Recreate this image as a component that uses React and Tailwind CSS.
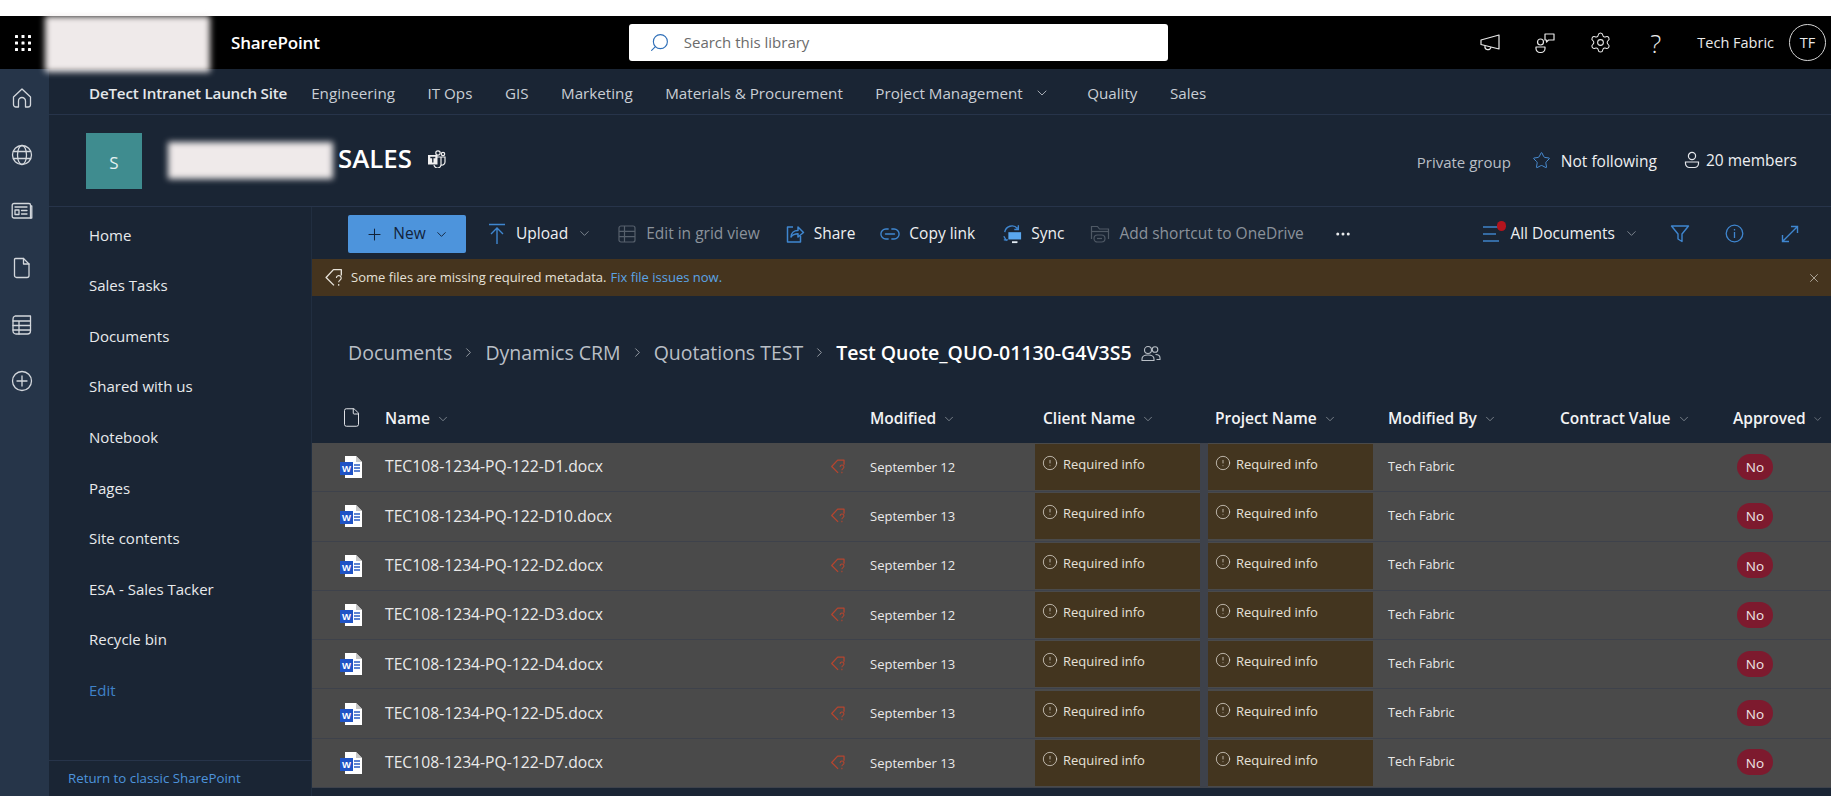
import React from "react";
import { Settings, Plus, ChevronDown, ChevronRight, Ellipsis, Star, X, CircleAlert, Search, File } from "lucide-react";

function Dots() {
  const pts = [0, 1, 2];
  return (
    <svg width="18" height="18" viewBox="0 0 18 18" fill="#fff">
      {pts.map((r) => pts.map((c) => <rect key={`${r}${c}`} x={1 + c * 6.5} y={1 + r * 6.5} width="3" height="3" rx="0.6" />))}
    </svg>
  );
}

const railProps = { fill: "none", stroke: "#d3d7dc", strokeWidth: 1.3, strokeLinejoin: "round", strokeLinecap: "round" };

function HomeIcon() {
  return (
    <svg width="22" height="22" viewBox="0 0 22 22" {...railProps}>
      <path d="M2.5 10L11 2l8.5 8v7.5a2.5 2.5 0 0 1-2.5 2.5h-2.5v-6a3.500 3.500 0 0 0-7 0v6H5a2.500 2.500 0 0 1-2.500-2.500z" />
    </svg>
  );
}
function GlobeIcon() {
  return (
    <svg width="22" height="22" viewBox="0 0 22 22" {...railProps}>
      <circle cx="11" cy="11" r="9.5" />
      <ellipse cx="11" cy="11" rx="4.5" ry="9.5" />
      <path d="M2.5 7.5h17M2.5 14.5h17" />
    </svg>
  );
}
function NewsIcon() {
  return (
    <svg width="22" height="18" viewBox="0 0 22 18" {...railProps}>
      <path d="M3 1.5h15a1.500 1.500 0 0 1 1.500 1.500v13H3a1.800 1.800 0 0 1-1.800-1.800V3.300A1.800 1.800 0 0 1 3 1.500z" />
      <path d="M19.5 4h1.300v12h-1.300" />
      <rect x="4" y="8" width="4" height="4.5" />
      <path d="M4 5h12M10.5 8.500h5.500M10.500 12h5.500" />
    </svg>
  );
}
function FileIcon() {
  return (
    <svg width="18" height="22" viewBox="0 0 18 22" {...railProps}>
      <path d="M2.5 1.5h8l5.500 5.500v11.500a2 2 0 0 1-2 2H3.500a2 2 0 0 1-2-2V2.500a1 1 0 0 1 1-1z" />
      <path d="M10.5 1.5V7H16" />
    </svg>
  );
}
function ListPageIcon() {
  return (
    <svg width="22" height="22" viewBox="0 0 22 22" {...railProps}>
      <path d="M4 2h15.500v15a3 3 0 0 1-3 3H5a3 3 0 0 1-3-3V5a3 3 0 0 1 2-3z" />
      <path d="M2 7h17.500M2 11.500h17.500M2 16h17.500M8 7v13" />
    </svg>
  );
}
function PlusCircleIcon() {
  return (
    <svg width="22" height="22" viewBox="0 0 22 22" {...railProps}>
      <circle cx="11" cy="11" r="9.5" />
      <path d="M11 6v10M6 11h10" />
    </svg>
  );
}

function MegaphoneIcon() {
  return (
    <svg width="22" height="22" viewBox="0 0 22 22" fill="none" stroke="#e8e8e8" strokeWidth="1.2" strokeLinejoin="round">
      <path d="M20 3v14L2 12.500V8z" />
      <path d="M6 14a3 3 0 0 0 6 1.200" />
    </svg>
  );
}

function ChatPerson() {
  return (
    <svg width="22" height="22" viewBox="0 0 22 22" fill="none" stroke="#e8e8e8" strokeWidth="1.2" strokeLinejoin="round">
      <circle cx="6.5" cy="10" r="3" />
      <path d="M2 15h9v1.500a4 4 0 0 1-4 4H6a4 4 0 0 1-4-4z" />
      <path d="M11 2h9v6h-5.500l-2 2V8H11z" />
    </svg>
  );
}

function Person() {
  return (
    <svg width="16" height="18" viewBox="0 0 16 18" fill="none" stroke="#e5e7eb" strokeWidth="1.2">
      <circle cx="8" cy="5" r="3.6" />
      <path d="M1.5 11h13v1.500a4 4 0 0 1-4 4h-5a4 4 0 0 1-4-4z" />
    </svg>
  );
}

function SharedIcon() {
  return (
    <svg width="20" height="18" viewBox="0 0 20 18" fill="none" stroke="#b9bfc6" strokeWidth="1.1">
      <circle cx="7" cy="6" r="3.5" />
      <path d="M1 15c0-3 2.500-4 6-4s6 1 6 4v1.500H1z" />
      <circle cx="14" cy="5.5" r="2.8" />
      <path d="M14.5 10.500c2.500 0 4.500 1 4.500 3.500v1.500h-3.500" />
    </svg>
  );
}

function TeamsIcon() {
  return (
    <svg width="19" height="18" viewBox="0 0 19 18" fill="none" stroke="#f1f1f1" strokeWidth="1.2">
      <circle cx="11" cy="3" r="2.2" />
      <circle cx="16" cy="4" r="1.7" />
      <path d="M10 7h8v5a3.200 3.200 0 0 1-4 3" />
      <path d="M14 7v7a3.500 3.500 0 0 1-7 1" />
      <rect x="1" y="5" width="9.5" height="9.5" fill="#f1f1f1" stroke="none" />
      <path d="M3.300 7.500h5M5.800 7.500v5" stroke="#1a2534" strokeWidth="1.3" />
    </svg>
  );
}

function TagWarn({ color = "#b5452f", size = 20, width = 1.5 }) {
  return (
    <svg width={size} height={size} viewBox="0 0 20 20" fill="none" stroke={color} strokeWidth={width} strokeLinejoin="round">
      <path d="M16.500 8V2.500H9L2 10l7.500 7.500" />
      <path d="M11.800 10.500a2.300 2.300 0 1 1 3.400 2c-.8.500-1.200 1-1.200 2M14 16.200v1.600" strokeWidth={width * 0.85} />
    </svg>
  );
}

function WordIcon() {
  return (
    <svg width="23" height="24" viewBox="0 0 23 24">
      <path d="M5 1h11l6 6v16H5z" fill="#fff" />
      <path d="M16 1l6 6h-6z" fill="#c8c8c8" />
      <path d="M14 10h6M14 13h6M14 16h6" stroke="#2b5cc4" strokeWidth="1.3" />
      <rect x="0" y="7" width="13" height="13" fill="#1f53c5" />
      <text x="6.5" y="17.4" textAnchor="middle" fill="#fff" fontSize="9.5" fontWeight="700" fontFamily="Liberation Sans, sans-serif">W</text>
    </svg>
  );
}

const blue = "#3f86cf";

function UploadIcon() {
  return (
    <svg width="18" height="22" viewBox="0 0 18 22" fill="none" stroke={blue} strokeWidth="1.4">
      <path d="M1 1.500h16M9 21V5M3 11l6-6 6 6" />
    </svg>
  );
}
function GridIcon() {
  return (
    <svg width="18" height="18" viewBox="0 0 18 18" fill="none" stroke="#56606c" strokeWidth="1.2">
      <rect x="1" y="1" width="16" height="16" rx="2" />
      <path d="M1 6.300h16M1 11.700h16M6.500 1v16" />
    </svg>
  );
}
function ShareIcon() {
  return (
    <svg width="20" height="20" viewBox="0 0 20 20" fill="none" stroke={blue} strokeWidth="1.5" strokeLinejoin="round">
      <path d="M8 3H2.500v15h13v-6" />
      <path d="M6 13c0-4 3-6.500 7-6.500V3l5.500 5.500L13 13V9.800c-3 0-5.500 1-7 3.200z" />
    </svg>
  );
}
function LinkIcon() {
  return (
    <svg width="22" height="14" viewBox="0 0 22 14" fill="none" stroke={blue} strokeWidth="1.5" strokeLinecap="round">
      <path d="M9 1.500H6.500a5.500 5.500 0 0 0 0 11H9M13 1.500h2.500a5.500 5.500 0 0 1 0 11H13M6 7h10" />
    </svg>
  );
}
function SyncIcon() {
  return (
    <svg width="22" height="22" viewBox="0 0 22 22" fill="none" stroke={blue} strokeWidth="1.5">
      <path d="M3 9a8 8 0 0 1 14-4M18 1.500V6h-4.500" />
      <path d="M2 13.500l3 5M2 17.500h4.500" />
      <path d="M7 9h14v8H7z" fill="#5aa7ee" stroke="none" />
      <path d="M11 20h6" stroke="#e5edf5" strokeWidth="2" />
    </svg>
  );
}
function ShortcutIcon() {
  return (
    <svg width="20" height="20" viewBox="0 0 20 20" fill="none" stroke="#4f5965" strokeWidth="1.2">
      <path d="M1.500 15V2.500h6l2 2.500h9v10" />
      <path d="M1.500 7.500h17" />
      <rect x="4" y="11" width="11" height="7" rx="3.5" />
      <path d="M7 14.500h5" />
    </svg>
  );
}
function FilterIcon() {
  return (
    <svg width="20" height="20" viewBox="0 0 20 20" fill="none" stroke={blue} strokeWidth="1.4" strokeLinejoin="round">
      <path d="M1.500 2h17l-6.500 8v7.500L8 15v-5z" />
    </svg>
  );
}
function InfoIcon() {
  return (
    <svg width="19" height="19" viewBox="0 0 19 19" fill="none" stroke={blue} strokeWidth="1.3">
      <circle cx="9.5" cy="9.5" r="8.3" />
      <path d="M9.500 8v6M9.500 5v1.500" />
    </svg>
  );
}
function ExpandIcon() {
  return (
    <svg width="18" height="18" viewBox="0 0 18 18" fill="none" stroke={blue} strokeWidth="1.4">
      <path d="M10 1.500h6.500V8M16.500 1.500L1.500 16.500M1.500 10v6.500H8" />
    </svg>
  );
}

function ListIcon() {
  return (
    <div className="relative w-[24px] h-[20px]">
      <svg width="18" height="20" viewBox="0 0 18 20" fill="none" stroke="#3f82c8" strokeWidth="1.3">
        <path d="M0 3h16M0 10h13M0 17h16" />
      </svg>
      <div className="absolute -top-[3px] left-[14px] w-[9px] h-[10px] rounded-full bg-[#b3141d]" />
    </div>
  );
}

const navItems = ["Engineering", "IT Ops", "GIS", "Marketing", "Materials & Procurement"];
const sideItems = ["Home", "Sales Tasks", "Documents", "Shared with us", "Notebook", "Pages", "Site contents", "ESA - Sales Tacker", "Recycle bin"];
const rows = [
  ["TEC108-1234-PQ-122-D1.docx", "September 12"],
  ["TEC108-1234-PQ-122-D10.docx", "September 13"],
  ["TEC108-1234-PQ-122-D2.docx", "September 12"],
  ["TEC108-1234-PQ-122-D3.docx", "September 12"],
  ["TEC108-1234-PQ-122-D4.docx", "September 13"],
  ["TEC108-1234-PQ-122-D5.docx", "September 13"],
  ["TEC108-1234-PQ-122-D7.docx", "September 13"],
];

function RailIcon({ children }) {
  return <div className="h-[56.6px] flex items-center justify-center pr-[6px]">{children}</div>;
}

function Cmd({ icon, label, dim, chevron, className = "" }) {
  return (
    <div className={`flex items-center shrink-0 ${className}`}>
      <span className="w-[20px] flex justify-center mr-[9px]">{icon}</span>
      <span className={dim ? "text-[#8b929b]" : "text-[#eef0f2]"}>{label}</span>
      {chevron && <ChevronDown size={15} strokeWidth={1.2} className="ml-[9px] text-[#9aa1a9]" />}
    </div>
  );
}

function Head({ label, width }) {
  return (
    <div className="flex items-center shrink-0 h-[22px] font-semibold text-[15.5px] text-[#f2f3f4]" style={{ width }}>
      {label}
      <ChevronDown size={14} strokeWidth={1.1} className="ml-[6px] text-[#aab0b7]" />
    </div>
  );
}

function Required() {
  return (
    <div className="h-[46px] w-[165px] shrink-0 bg-[#43351f] flex items-start pl-[7px] pt-[11px] text-[13px] leading-[18px] text-[#e6e1d8]">
      <CircleAlert size={16} strokeWidth={1.1} className="mr-[5px] text-[#e6e1d8]" />
      Required info
    </div>
  );
}

export default function App() {
  return (
    <div className="w-full h-[796px] overflow-hidden flex flex-col bg-[#1a2534] text-white font-['Open_Sans',sans-serif]">
      <div className="h-[16px] bg-white shrink-0" />

      <header className="h-[53px] shrink-0 bg-black flex items-center relative">
        <div className="w-[45px] flex justify-center"><Dots /></div>
        <div className="w-[165px] h-[56px] self-start bg-[#efeaea] blur-[3px] z-10" />
        <div className="ml-[21px] text-[17px] font-semibold tracking-[-0.15px] pt-[1px]">SharePoint</div>
        <div className="ml-[309px] w-[539px] h-[37px] bg-white rounded-[3px] flex items-center pl-[20px] text-[#6b6b6b] text-[15px]">
          <Search size={21} strokeWidth={1.3} className="text-[#2f6fb8] mr-[14px] -scale-x-100" />
          Search this library
        </div>
        <div className="flex-1" />
        <div className="flex items-center text-[#eaeaea]">
          <span className="mr-[33px]"><MegaphoneIcon /></span>
          <span className="mr-[33px]"><ChatPerson /></span>
          <Settings size={23} strokeWidth={1.1} className="mr-[38px]" />
          <span className="text-[26px] font-light leading-none mr-[36px]">?</span>
          <span className="text-[14.5px] mr-[15px]">Tech Fabric</span>
          <div className="w-[37px] h-[37px] mr-[5px] rounded-full border border-[#d5d5d5] flex items-center justify-center text-[14.5px]">TF</div>
        </div>
      </header>

      <div className="flex-1 flex min-h-0">
        <aside className="w-[49px] shrink-0 bg-[#263549] pt-[1px]">
          <RailIcon><HomeIcon /></RailIcon>
          <RailIcon><GlobeIcon /></RailIcon>
          <RailIcon><NewsIcon /></RailIcon>
          <RailIcon><FileIcon /></RailIcon>
          <RailIcon><ListPageIcon /></RailIcon>
          <RailIcon><PlusCircleIcon /></RailIcon>
        </aside>

        <div className="flex-1 min-w-0 flex flex-col">
          <nav className="h-[46px] shrink-0 border-b border-[#27344a] flex items-center pl-[40px] pt-[3px] text-[15.2px] text-[#c9ced4]">
            <span className="font-semibold text-[#e4e7ea] mr-[24px] tracking-[-0.2px]">DeTect Intranet Launch Site</span>
            <div className="flex items-center gap-[32.5px]">
              {navItems.map((n) => <span key={n}>{n}</span>)}
              <span className="flex items-center">Project Management<ChevronDown size={16} strokeWidth={1.2} className="ml-[11px] mr-[5px]" /></span>
              <span>Quality</span>
              <span>Sales</span>
            </div>
          </nav>

          <div className="h-[92px] shrink-0 border-b border-[#27344a] flex items-center pl-[37px] pr-[34px]">
            <div className="w-[56px] h-[56px] bg-[#3f8c8f] flex items-center justify-center text-[17px] text-[#e5f1f1] mt-[1px] pt-[4px]">S</div>
            <div className="ml-[26px] w-[165px] h-[37px] bg-[#efeaea] blur-[3px]" />
            <div className="ml-[5px] text-[25.8px] font-semibold leading-none -mt-[3px]">SALES</div>
            <span className="ml-[15px] -mt-[3px]"><TeamsIcon /></span>
            <div className="flex-1" />
            <span className="text-[15px] text-[#b9bfc6] mt-[3px]">Private group</span>
            <Star size={19} strokeWidth={1.2} className="ml-[21px] mr-[10px] text-[#4a90d9] -mt-[1px]" />
            <span className="text-[15.5px] text-[#eef0f2] mt-[3px]">Not following</span>
            <span className="ml-[27px] mr-[6px] -mt-[1px]"><Person /></span>
            <span className="text-[15.5px] text-[#eef0f2]">20 members</span>
          </div>

          <div className="flex-1 flex min-h-0">
            <div className="w-[263px] shrink-0 border-r border-[#212e40] flex flex-col">
              <div className="pt-[2.5px] flex-1">
                {sideItems.map((s) => (
                  <div key={s} className="h-[50.6px] flex items-center pl-[40px] text-[15px] text-[#e8eaec]">{s}</div>
                ))}
                <div className="h-[50.6px] flex items-center pl-[40px] text-[15px] text-[#3f82c8]">Edit</div>
              </div>
              <div className="h-[36px] border-t border-[#27344a] flex items-center pl-[19px] text-[13.3px] text-[#4d94dc]">Return to classic SharePoint</div>
            </div>

            <main className="flex-1 min-w-0 flex flex-col">
              <div className="h-[52px] shrink-0 flex items-center pl-[36px] text-[15.5px]">
                <div className="w-[118px] h-[38px] bg-[#4d94dc] rounded-[2px] flex items-center justify-center text-[#12233a] mt-[2px] font-medium">
                  <Plus size={19} strokeWidth={1.3} className="mr-[9px]" />New<ChevronDown size={15} strokeWidth={1.5} className="ml-[8px]" />
                </div>
                <div className="flex items-center mt-[1px] ml-[21px]">
                  <Cmd icon={<UploadIcon />} label="Upload" chevron />
                  <Cmd className="ml-[25px]" icon={<GridIcon />} label="Edit in grid view" dim />
                  <Cmd className="ml-[25px]" icon={<ShareIcon />} label="Share" />
                  <Cmd className="ml-[25px]" icon={<LinkIcon />} label="Copy link" />
                  <Cmd className="ml-[27px]" icon={<SyncIcon />} label="Sync" />
                  <Cmd className="ml-[26px]" icon={<ShortcutIcon />} label="Add shortcut to OneDrive" dim />
                  <Ellipsis size={18} className="ml-[30px] text-[#e8eaec]" />
                </div>
                <div className="flex-1" />
                <div className="flex items-center mt-[1px]">
                  <ListIcon />
                  <span className="text-[#eef0f2] ml-[3px]">All Documents</span>
                  <ChevronDown size={15} strokeWidth={1.2} className="ml-[9px] text-[#9aa1a9]" />
                  <span className="ml-[31px]"><FilterIcon /></span>
                  <span className="ml-[35px]"><InfoIcon /></span>
                  <span className="ml-[37px] mr-[32px]"><ExpandIcon /></span>
                </div>
              </div>

              <div className="h-[37px] shrink-0 bg-[#45341e] flex items-center pl-[12px] pr-[10px] text-[13px]">
                <TagWarn color="#e6e1d8" size={21} width={1.3} />
                <span className="ml-[6px] text-[#e6e1d8]">Some files are missing required metadata.</span>
                <span className="ml-[4px] text-[#5ba4e6]">Fix file issues now.</span>
                <div className="flex-1" />
                <X size={14} strokeWidth={1.2} className="text-[#d6d1c8]" />
              </div>

              <div className="h-[112px] shrink-0 flex items-center pl-[36px] text-[19.5px] text-[#b9bfc6] pt-[1px]">
                <span>Documents</span>
                <ChevronRight size={15} strokeWidth={1.2} className="mx-[9px]" />
                <span>Dynamics CRM</span>
                <ChevronRight size={15} strokeWidth={1.2} className="mx-[9px]" />
                <span>Quotations TEST</span>
                <ChevronRight size={15} strokeWidth={1.2} className="mx-[9px]" />
                <span className="font-semibold text-white">Test Quote_QUO-01130-G4V3S5</span>
                <span className="ml-[9px]"><SharedIcon /></span>
              </div>

              <div className="h-[35px] shrink-0 flex items-start">
                <div className="w-[73px] pl-[29px] -mt-[1px]"><File size={21} strokeWidth={1.1} className="text-[#e5e7eb]" /></div>
                <Head label="Name" width={485} />
                <Head label="Modified" width={173} />
                <Head label="Client Name" width={172} />
                <Head label="Project Name" width={173} />
                <Head label="Modified By" width={172} />
                <Head label="Contract Value" width={173} />
                <Head label="Approved" width={90} />
              </div>

              <div className="shrink-0">
                {rows.map(([name, date]) => (
                  <div key={name} className="h-[49.3px] bg-[#4a4a4a] border-b border-[#3e424b] flex items-center text-[#e9e9e9]">
                    <div className="w-[73px] pl-[28px] flex"><WordIcon /></div>
                    <div className="w-[445px] text-[15.7px]">{name}</div>
                    <div className="w-[40px] -mt-[1px]"><TagWarn size={17} /></div>
                    <div className="w-[165px] text-[13px] pt-[1px]">{date}</div>
                    <Required />
                    <div className="w-[8px] self-stretch bg-[#3e424b]" />
                    <Required />
                    <div className="w-[15px]" />
                    <div className="w-[349px] text-[12.6px]">Tech Fabric</div>
                    <div className="w-[36px] h-[26px] -mt-[1px] rounded-full bg-[#7d1a2e] flex items-center justify-center text-[13.5px] text-[#efe6e6] pt-[1px]">No</div>
                  </div>
                ))}
              </div>
            </main>
          </div>
        </div>
      </div>
    </div>
  );
}
